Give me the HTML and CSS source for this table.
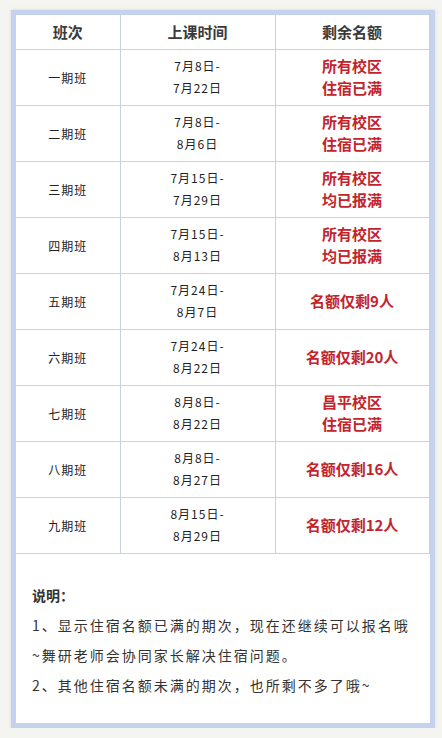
FILE: index.html
```html
<!DOCTYPE html>
<html lang="zh-CN">
<head>
<meta charset="utf-8">
<title>班次安排</title>
<link rel="stylesheet" href="styles.css">
</head>
<body>
<div class="frame">
  <table class="schedule">
    <colgroup>
      <col class="c1">
      <col class="c2">
      <col class="c3">
    </colgroup>
    <thead>
      <tr class="head">
        <th>班次</th>
        <th>上课时间</th>
        <th>剩余名额</th>
      </tr>
    </thead>
    <tbody>
      <tr>
        <td class="name">一期班</td>
        <td class="date">7月8日-<br>7月22日</td>
        <td class="left">所有校区<br>住宿已满</td>
      </tr>
      <tr>
        <td class="name">二期班</td>
        <td class="date">7月8日-<br>8月6日</td>
        <td class="left">所有校区<br>住宿已满</td>
      </tr>
      <tr>
        <td class="name">三期班</td>
        <td class="date">7月15日-<br>7月29日</td>
        <td class="left">所有校区<br>均已报满</td>
      </tr>
      <tr>
        <td class="name">四期班</td>
        <td class="date">7月15日-<br>8月13日</td>
        <td class="left">所有校区<br>均已报满</td>
      </tr>
      <tr>
        <td class="name">五期班</td>
        <td class="date">7月24日-<br>8月7日</td>
        <td class="left">名额仅剩9人</td>
      </tr>
      <tr>
        <td class="name">六期班</td>
        <td class="date">7月24日-<br>8月22日</td>
        <td class="left">名额仅剩20人</td>
      </tr>
      <tr>
        <td class="name">七期班</td>
        <td class="date">8月8日-<br>8月22日</td>
        <td class="left">昌平校区<br>住宿已满</td>
      </tr>
      <tr>
        <td class="name">八期班</td>
        <td class="date">8月8日-<br>8月27日</td>
        <td class="left">名额仅剩16人</td>
      </tr>
      <tr>
        <td class="name">九期班</td>
        <td class="date">8月15日-<br>8月29日</td>
        <td class="left">名额仅剩12人</td>
      </tr>
    </tbody>
  </table>
  <div class="notes">
    <p class="title">说明：</p>
    <p>1、显示住宿名额已满的期次，现在还继续可以报名哦~舞研老师会协同家长解决住宿问题。</p>
    <p>2、其他住宿名额未满的期次，也所剩不多了哦~</p>
  </div>
</div>
</body>
</html>
```
FILE: styles.css
```css
html, body {
  margin: 0;
  padding: 0;
}
body {
  background: #f4f5f0;
  font-family: "Noto Sans CJK SC", "Noto Sans", sans-serif;
  color: #222;
}
.frame {
  box-sizing: content-box;
  width: 414px;
  height: 708px;
  margin: 10px 0 0 11px;
  border: 5px solid #c6d1ee;
  background: #fff;
  box-shadow: 0 0 3px rgba(160, 170, 190, 0.35);
}
.schedule {
  border-collapse: collapse;
  table-layout: fixed;
  width: 413px;
}
.c1 { width: 104px; }
.c2 { width: 155px; }
.c3 { width: 154px; }
.schedule th,
.schedule td {
  border: 1px solid #c9d0e2;
  padding: 0;
  text-align: center;
  vertical-align: middle;
}
.schedule thead th {
  border-top: none;
}
.schedule th:first-child,
.schedule td:first-child {
  border-left: none;
}
.head {
  height: 34px;
}
.head th {
  font-size: 15px;
  font-weight: 700;
  color: #3a3a3a;
  line-height: 20px;
}
.schedule tbody tr {
  height: 56px;
}
.name {
  font-size: 12px;
  letter-spacing: 1px;
  color: #222;
}
.date {
  font-size: 12px;
  letter-spacing: 1px;
  line-height: 22px;
  color: #222;
}
.left {
  font-size: 15px;
  font-weight: 700;
  line-height: 22px;
  color: #c3232b;
}
.notes {
  padding: 26px 16px 0 16px;
  font-size: 14px;
  letter-spacing: 2px;
  line-height: 30px;
  color: #333;
}
.notes p {
  margin: 0;
}
.notes .title {
  font-weight: 700;
  letter-spacing: 0;
}
```
